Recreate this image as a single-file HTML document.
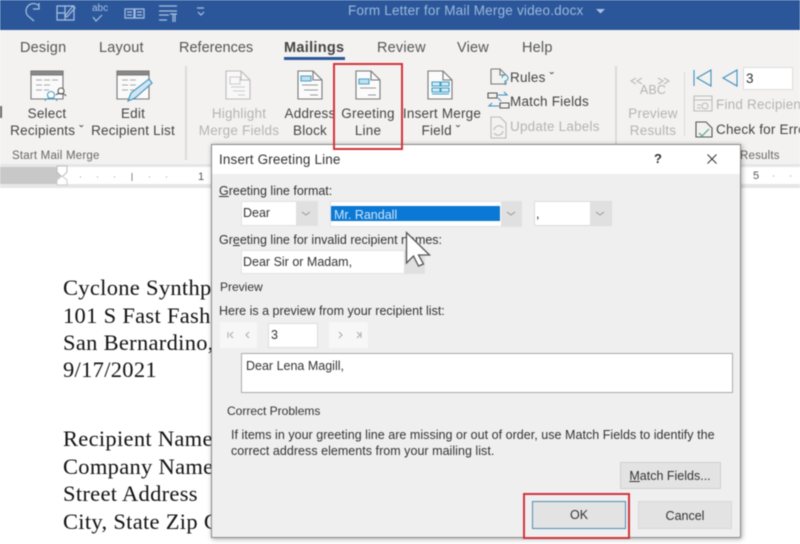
<!DOCTYPE html>
<html><head><meta charset="utf-8"><style>
html,body{margin:0;padding:0;background:#fff}
#p{position:relative;width:800px;height:544px;overflow:hidden;background:#fff;font-family:"Liberation Sans",sans-serif;filter:blur(.5px)}
.t{position:absolute;white-space:nowrap;color:#444;font-size:13.5px;letter-spacing:.2px;line-height:16px}
.c{text-align:center;transform:translateX(-50%)}
.g{color:#b4b4b4}
.d{color:#333;font-size:12.5px;letter-spacing:0}
.s{position:absolute;font-family:"Liberation Serif",serif;font-size:22.5px;letter-spacing:.3px;color:#111;white-space:nowrap;line-height:24px}
.b{position:absolute;box-sizing:border-box}
svg{position:absolute;overflow:visible}
</style></head><body><div id="p">
<!-- title -->
<div class="b" style="left:0;top:0;width:800px;height:30px;background:#2b579a"></div>
<svg style="left:0;top:0" width="240" height="30" fill="none" stroke="#a9c0e0" stroke-width="1.2">
<path d="M39 6 a7 7 0 1 0 -11 10 l6 5 M39 3v6h-6"/>
<path d="M57 6h17v14H57z M57 13h8 M65 6v14"/><path d="M65 16l8-10 2 2-8 9z"/>
<path d="M93 17l3 4 6-6"/>
<path d="M125 9h9v9h-9z M135 9h9v9h-9z M127 12h5 M127 15h5 M137 12h5 M137 15h5"/>
<path d="M159 6h18 M159 11h18 M159 15h10 M159 20h8"/><path d="M170 14h7 M173 14v8 M175 14v8" />
<path d="M197 8h7 M198 12l3 3 3-3"/>
</svg>
<div class="t" style="left:92px;top:3px;font-size:10px;color:#a9c0e0;letter-spacing:0;line-height:12px">abc</div>
<div class="t" style="left:348px;top:3px;color:#9db8dc;font-size:13.5px;letter-spacing:.2px">Form Letter for Mail Merge video.docx</div>
<svg style="left:596px;top:9px" width="10" height="6"><path d="M0 0h9l-4.500 4.500z" fill="#a9c0e0"/></svg>
<!-- ribbon -->
<div class="b" style="left:0;top:30px;width:800px;height:134px;background:#f3f2f1"></div>
<div class="t" style="left:20px;top:40px;font-size:14.500px;color:#555">Design</div>
<div class="t" style="left:99px;top:40px;font-size:14.500px;color:#555">Layout</div>
<div class="t" style="left:179px;top:40px;font-size:14.500px;letter-spacing:0;color:#555">References</div>
<div class="t" style="left:284px;top:40px;font-size:14.500px;font-weight:bold;letter-spacing:.3px;color:#444">Mailings</div>
<div class="b" style="left:284px;top:57px;width:61px;height:3px;background:#2b579a"></div>
<div class="t" style="left:377px;top:40px;font-size:14.500px;color:#555">Review</div>
<div class="t" style="left:457px;top:40px;font-size:14.500px;color:#555">View</div>
<div class="t" style="left:522px;top:40px;font-size:14.500px;color:#555">Help</div>
<!-- icons row -->
<svg style="left:0;top:0" width="800" height="164" fill="none" stroke="#777" stroke-width="1.100">
<path d="M31 71h32v28H31z" fill="#fafafa"/><path d="M31 71h32v4H31z" fill="#888"/>
<path d="M36 80h6M44 80h6M52 80h6M36 85h6M44 85h6M36 90h6M44 90h5" stroke="#aaa"/>
<circle cx="51" cy="95" r="3.500" stroke="#4aa0c8" fill="#fff"/><path d="M45 101c1-4 11-4 12 0" stroke="#4aa0c8"/>
<circle cx="61" cy="91" r="3" stroke="#555" fill="#fff"/><path d="M56 95c1-2 9-2 10 1" stroke="#555"/>
<path d="M117 71h32v28h-32z" fill="#fafafa"/><path d="M117 71h32v4h-32z" fill="#888"/>
<path d="M122 80h6M130 80h6M122 85h6M130 85h6M122 90h6M130 90h5" stroke="#aaa"/>
<path d="M128 101l3-8 18-14 3 4-17 15z" stroke="#3f8fbd" fill="#cfe6f2"/>
<path d="M226 71h15l9 9v19h-24z" stroke="#bbb" fill="#f8f8f8"/><path d="M241 71v9h9" stroke="#bbb"/>
<path d="M230 77h10v7h-10z" stroke="#ccc"/><path d="M231 87h14M233 91h12M238 95h7" stroke="#ccc"/>
<path d="M298 71h15l9 9v19h-24z" fill="#fbfbfb"/><path d="M313 71v9h9"/>
<path d="M301 76h10v5h-10z" stroke="#4aa0c8" fill="#bfe0ee"/><path d="M302 85h16M304 90h14M310 95h8" stroke="#999"/>
<path d="M356 71h15l9 9v19h-24z" fill="#fbfbfb"/><path d="M371 71v9h9"/>
<path d="M359 79h10v5h-10z" stroke="#4aa0c8" fill="#bfe0ee"/><path d="M360 88h16M368 95h8" stroke="#999"/>
<path d="M428 71h15l9 9v19h-24z" fill="#fbfbfb"/><path d="M443 71v9h9"/>
<path d="M432 82h8v4h-8zM441 82h8v4h-8zM432 88h8v4h-8zM441 88h8v4h-8zM432 94h17" stroke="#3f9cc4" fill="#d5ecf5"/>
<path d="M491 69h9l6 6v0M491 69v15h15v-2M500 69v6h6"/><path d="M502 78a3 3 0 1 1 3 3v2M505 84v1" stroke="#3f9cc4"/>
<path d="M488 93h9v5h-9zM500 103h9v5h-9z" stroke="#555"/><path d="M498 95h9l-3-3M498 98l3 3M499 106h-10l3-3" stroke="#3f8fbd"/>
<path d="M491 117h9l6 6v15h-15z" stroke="#bbb"/><path d="M494 130a5 5 0 0 1 9-2M503 131a5 5 0 0 1-9 2" stroke="#bbb"/>
<path d="M638 78l-5 3 5 3M644 78l-5 3 5 3M660 78l5 3-5 3M666 78l5 3-5 3" stroke="#bbb" transform="translate(-2 0)"/>
<path d="M694 70v16M711 70l-14 8 14 8zM737 70l-14 8 14 8z" stroke="#3f8fbd"/>
<path d="M694 96h18v15h-18zM694 100h18" stroke="#bbb"/><path d="M697 105h4M697 108h4" stroke="#bbb"/><circle cx="705" cy="106" r="3" stroke="#bbb"/>
<path d="M696 122h10l6 6v9h-16z" stroke="#555"/><path d="M699 133l3 3 7-7" stroke="#4a9a8a"/>
</svg>
<!-- separators -->
<div class="b" style="left:185px;top:66px;width:2px;height:94px;background:#dcdbda"></div>
<div class="b" style="left:615px;top:66px;width:2px;height:94px;background:#dcdbda"></div>
<div class="b" style="left:684px;top:72px;width:1px;height:64px;background:#dcdbda"></div>
<!-- ribbon text -->
<div class="b" style="left:0;top:106px;width:2px;height:12px;background:#666"></div>
<div class="t c" style="left:47px;top:106px">Select</div>
<div class="t c" style="left:47px;top:123px">Recipients &#711;</div>
<div class="t c" style="left:133px;top:106px">Edit</div>
<div class="t c" style="left:133px;top:123px">Recipient List</div>
<div class="t g c" style="left:239px;top:106px">Highlight</div>
<div class="t g c" style="left:239px;top:123px">Merge Fields</div>
<div class="t c" style="left:310px;top:106px">Address</div>
<div class="t c" style="left:310px;top:123px">Block</div>
<div class="t c" style="left:368px;top:106px">Greeting</div>
<div class="t c" style="left:368px;top:123px">Line</div>
<div class="t c" style="left:442px;top:106px">Insert Merge</div>
<div class="t c" style="left:441px;top:123px">Field &#711;</div>
<div class="t" style="left:510px;top:70px">Rules &#711;</div>
<div class="t" style="left:510px;top:94px">Match Fields</div>
<div class="t g" style="left:510px;top:119px">Update Labels</div>
<div class="t g c" style="left:653px;top:82px;font-size:12.500px">ABC</div>
<div class="t g c" style="left:653px;top:106px">Preview</div>
<div class="t g c" style="left:653px;top:123px">Results</div>
<div class="t g" style="left:716px;top:97px">Find Recipient</div>
<div class="t" style="left:716px;top:122px">Check for Errors</div>
<div class="t" style="left:12px;top:148px;font-size:11.500px;color:#666">Start Mail Merge</div>
<div class="t" style="left:740px;top:148px;font-size:11.500px;color:#666">Results</div>
<div class="b" style="left:743px;top:67px;width:50px;height:23px;background:#fff;border:1px solid #ddd"></div>
<div class="t" style="left:746px;top:71px;color:#333">3</div>
<!-- ruler -->
<div class="b" style="left:0;top:164px;width:800px;height:24px;background:#e6e6e6"></div>
<div class="b" style="left:62px;top:167px;width:738px;height:17px;background:#fff"></div>
<div class="b" style="left:0;top:167px;width:62px;height:17px;background:#c8c8c8"></div>
<svg style="left:0;top:0" width="800" height="190"><path d="M57 166h10v6l-5 5-5-5z" fill="#fff" stroke="#bbb"/><path d="M57 180l5-4 5 4v5H57z" fill="#fff" stroke="#ccc"/><path d="M132 173v8" stroke="#888"/><path d="M80 177h1M97 177h1M114 177h1M149 177h1M166 177h1" stroke="#999"/><path d="M773 176h1M790 176h1" stroke="#999"/></svg>
<div class="t" style="left:198px;top:169px;font-size:11px;color:#555">1</div>
<div class="t" style="left:753px;top:168px;font-size:11px;color:#555">5</div>
<!-- doc -->
<div class="s" style="left:63px;top:276px">Cyclone Synthp</div>
<div class="s" style="left:63px;top:304px">101 S Fast Fash</div>
<div class="s" style="left:63px;top:331px">San Bernardino,</div>
<div class="s" style="left:63px;top:358px">9/17/2021</div>
<div class="s" style="left:63px;top:427px">Recipient Name</div>
<div class="s" style="left:63px;top:455px">Company Name</div>
<div class="s" style="left:63px;top:482px">Street Address</div>
<div class="s" style="left:63px;top:510px">City, State Zip C</div>
<!-- dialog -->
<div class="b" style="left:211px;top:144px;width:530px;height:394px;background:#efefef;border:1px solid #8a8a8a;box-shadow:1px 1px 5px rgba(0,0,0,.35)"></div>
<div class="b" style="left:212px;top:145px;width:528px;height:29px;background:#fff"></div>
<div class="t" style="left:219px;top:152px;font-size:13.500px;color:#333;letter-spacing:.15px">Insert Greeting Line</div>
<div class="t" style="left:654px;top:151px;font-size:13px;color:#333;font-weight:bold">?</div>
<svg style="left:707px;top:154px" width="11" height="11" fill="none" stroke="#333" stroke-width="1"><path d="M.5 .5l9 9M9.500 .5l-9 9"/></svg>
<div class="t d" style="left:219px;top:183px"><u>G</u>reeting line format:</div>
<div class="b" style="left:241px;top:201px;width:77px;height:25px;background:#fff;border:1px solid #e2e2e2"></div>
<div class="b" style="left:296px;top:202px;width:21px;height:23px;background:#e0e0e0"></div>
<div class="t d" style="left:243px;top:205px">Dear</div>
<div class="b" style="left:330px;top:201px;width:192px;height:26px;background:#fff;border:1px solid #e2e2e2"></div>
<div class="b" style="left:331px;top:206px;width:169px;height:15px;background:#0a78d4"></div>
<div class="t d" style="left:334px;top:207px;color:#cfe6fa">Mr. Randall</div>
<div class="b" style="left:501px;top:202px;width:21px;height:24px;background:#e0e0e0"></div>
<div class="b" style="left:534px;top:201px;width:78px;height:25px;background:#fff;border:1px solid #dcdcdc"></div>
<div class="b" style="left:590px;top:202px;width:21px;height:23px;background:#e0e0e0"></div>
<div class="t d" style="left:536px;top:206px">,</div>
<svg style="left:0;top:0" width="800" height="544" fill="none" stroke="#999"><path d="M302 212l4 3 4-3M507 212l4 3 4-3M596 212l4 3 4-3"/></svg>
<div class="t d" style="left:219px;top:232px">Gr<u>e</u>eting line for invalid recipient names:</div>
<div class="b" style="left:241px;top:250px;width:184px;height:24px;background:#fff;border:1px solid #e2e2e2"></div>
<div class="b" style="left:404px;top:251px;width:20px;height:22px;background:#e0e0e0"></div>
<div class="t d" style="left:243px;top:254px">Dear Sir or Madam,</div>
<svg style="left:405px;top:231px" width="24" height="36"><path d="M1.500 1.500V32l7-7 5 10 5-2-5-9h11z" fill="#fff" stroke="#555" stroke-width="1.300"/></svg>
<div class="t d" style="left:220px;top:279px;font-size:12px">Preview</div>
<div class="t d" style="left:219px;top:303px">Here is a preview from your recipient list:</div>
<div class="b" style="left:220px;top:322px;width:37px;height:26px;background:#f7f7f7"></div>
<div class="b" style="left:268px;top:323px;width:50px;height:25px;background:#fff;border:1px solid #ddd"></div>
<div class="t d" style="left:271px;top:327px">3</div>
<div class="b" style="left:329px;top:322px;width:39px;height:26px;background:#f7f7f7"></div>
<svg style="left:0;top:0" width="800" height="544" fill="none" stroke="#aaa"><path d="M228 332v6M233 332l-3 3 3 3M249 332l-3 3 3 3M339 332l3 3-3 3M357 332l3 3-3 3M361 332v6"/></svg>
<div class="b" style="left:241px;top:353px;width:492px;height:40px;background:#fff;border:1px solid #aaa"></div>
<div class="t d" style="left:246px;top:358px">Dear Lena Magill,</div>
<div class="t d" style="left:227px;top:403px;font-size:12px">Correct Problems</div>
<div class="t d" style="left:231px;top:427px;font-size:12.500px;letter-spacing:.03px">If items in your greeting line are missing or out of order, use Match Fields to identify the</div>
<div class="t d" style="left:231px;top:443px;font-size:12.500px;letter-spacing:.03px">correct address elements from your mailing list.</div>
<div class="b" style="left:620px;top:462px;width:101px;height:27px;background:#e3e3e3;border:1px solid #d0d0d0"></div>
<div class="t d c" style="left:670px;top:468px"><u>M</u>atch Fields...</div>
<div class="b" style="left:532px;top:501px;width:94px;height:28px;background:#e3e3e3;border:1px solid #4d8db8"></div>
<div class="t d c" style="left:579px;top:507px">OK</div>
<div class="b" style="left:638px;top:501px;width:94px;height:28px;background:#e3e3e3;border:1px solid #d8d8d8"></div>
<div class="t d c" style="left:685px;top:508px">Cancel</div>
<!-- red boxes on top -->
<div class="b" style="left:333px;top:63px;width:70px;height:87px;border:2px solid #d0343c"></div>
<div class="b" style="left:523px;top:493px;width:107px;height:46px;border:2px solid #d0343c"></div>
</div></body></html>
